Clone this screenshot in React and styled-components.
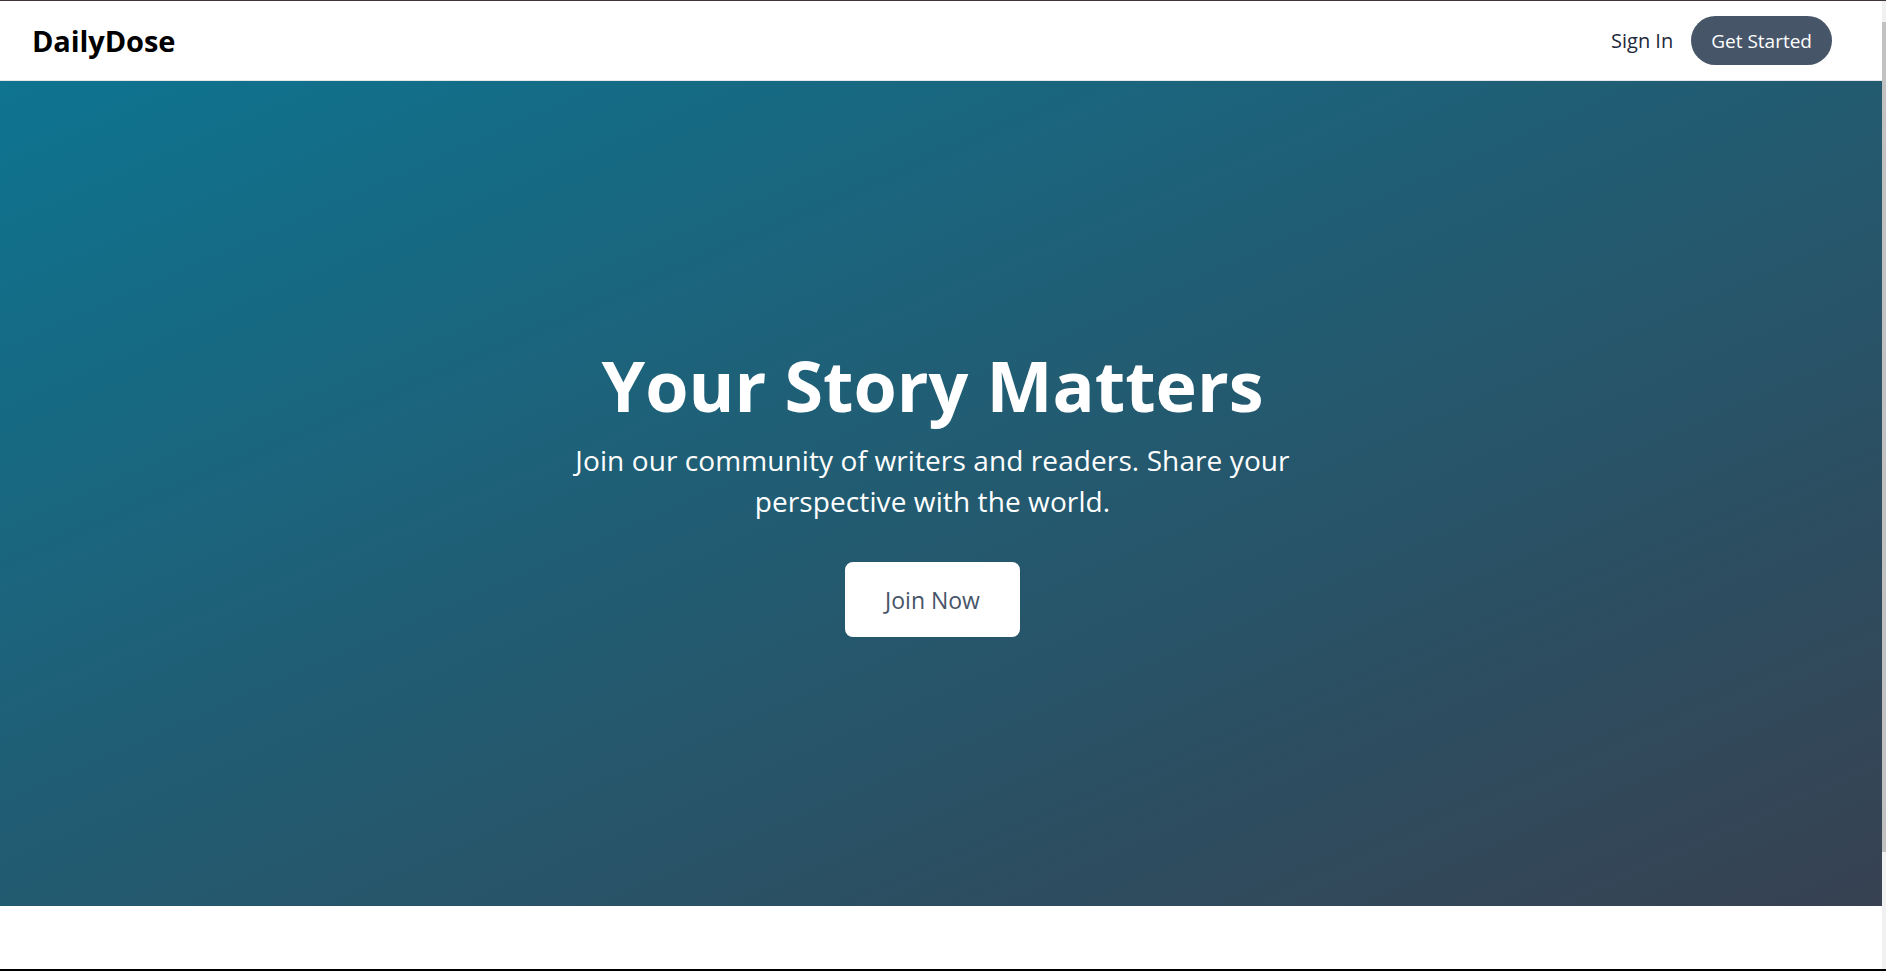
import React from "react";
import styled, { createGlobalStyle } from "styled-components";

const Global = createGlobalStyle`
  html, body { margin: 0; padding: 0; background: #ffffff; overflow: hidden; }
  body { font-family: "Open Sans", "Noto Sans", "DejaVu Sans", sans-serif; }
  * { box-sizing: border-box; }
`;

const Frame = styled.div`
  display: flex;
  height: 971px;
  border-top: 1px solid #3e3539;
  border-bottom: 2px solid #000000;
  overflow: hidden;
`;

const Page = styled.div`
  flex: 1;
  display: flex;
  flex-direction: column;
  background: #ffffff;
`;

const Header = styled.header`
  height: 80px;
  flex: none;
  display: flex;
  align-items: center;
  justify-content: space-between;
  padding: 0 50px 0 32px;
  border-bottom: 1px solid #e5e7eb;
  background: #ffffff;
`;

const Logo = styled.div`
  font-size: 29px;
  font-weight: 700;
  color: #000000;
  letter-spacing: -0.1px;
`;

const Nav = styled.nav`
  display: flex;
  align-items: center;
  gap: 18px;
`;

const NavLink = styled.a`
  font-size: 20px;
  color: #1e293b;
  text-decoration: none;
  cursor: pointer;
`;

const PillButton = styled.button`
  height: 49px;
  padding: 0 20px;
  border: none;
  border-radius: 999px;
  background: #475569;
  color: #ffffff;
  font-family: inherit;
  font-size: 19px;
  cursor: pointer;
`;

const Hero = styled.section`
  height: 825px;
  flex: none;
  display: flex;
  flex-direction: column;
  align-items: center;
  justify-content: center;
  padding: 0 17px 0 0;
  text-align: center;
  background: linear-gradient(to bottom right, #0e7490, #374151);
  color: #ffffff;
`;

const Title = styled.h1`
  margin: 0;
  font-size: 70px;
  line-height: 70px;
  font-weight: 700;
`;

const Subtitle = styled.p`
  margin: 20px 0 0;
  max-width: 768px;
  font-size: 28px;
  line-height: 41px;
  font-weight: 400;
  letter-spacing: 0.1px;
`;

const CtaButton = styled.button`
  margin-top: 40px;
  width: 175px;
  height: 75px;
  border: none;
  border-radius: 8px;
  background: #ffffff;
  color: #475569;
  font-family: inherit;
  font-size: 23px;
  cursor: pointer;
`;

const Scrollbar = styled.div`
  width: 4px;
  flex: none;
  background: #f1f1f1;
  padding-top: 21px;
`;

const Thumb = styled.div`
  height: 830px;
  background: #c1c1c1;
`;

export default function App() {
  return (
    <>
      <Global />
      <Frame>
        <Page>
          <Header>
            <Logo>DailyDose</Logo>
            <Nav>
              <NavLink>Sign In</NavLink>
              <PillButton>Get Started</PillButton>
            </Nav>
          </Header>
          <Hero>
            <Title>Your Story Matters</Title>
            <Subtitle>
              Join our community of writers and readers. Share your perspective with the world.
            </Subtitle>
            <CtaButton>Join Now</CtaButton>
          </Hero>
        </Page>
        <Scrollbar>
          <Thumb />
        </Scrollbar>
      </Frame>
    </>
  );
}
